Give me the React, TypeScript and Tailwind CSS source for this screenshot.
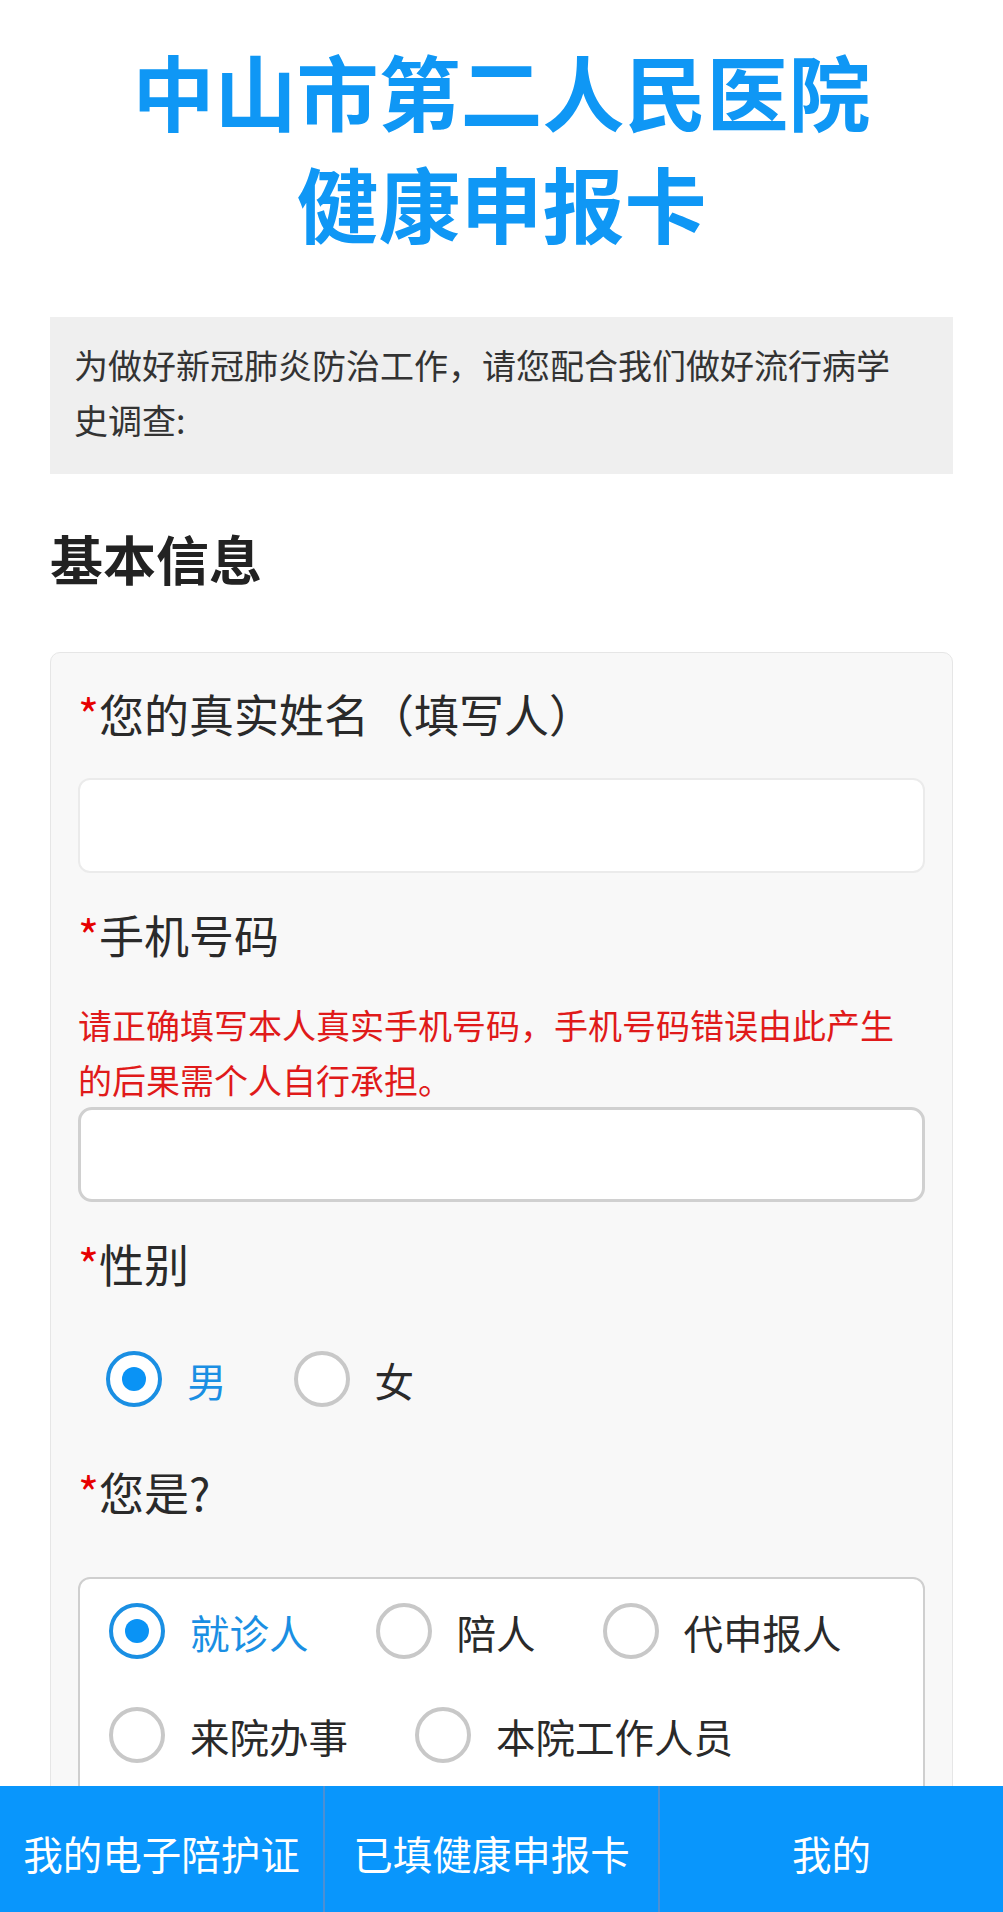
import React from "react";

const font = { fontFamily: '"Noto Sans CJK SC", "Noto Sans", sans-serif' };

function Radio({ label, checked }: { label: string; checked?: boolean }) {
  return (
    <div className="flex items-center mr-[67px]">
      <span
        className={
          "w-[56px] h-[56px] rounded-full border-[4px] flex items-center justify-center shrink-0 " +
          (checked ? "border-[#1a8fe3] bg-white" : "border-[#c8c8c8] bg-white")
        }
      >
        {checked && <span className="w-[24px] h-[24px] rounded-full bg-[#0a93f5]" />}
      </span>
      <span className={"ml-[25px] text-[39.5px] leading-[55px] " + (checked ? "text-[#1a8fe3]" : "text-[#2a2a2a]")}>
        {label}
      </span>
    </div>
  );
}

function Label({ text }: { text: string }) {
  return (
    <div className="text-[45px] leading-[60px] text-[#2a2a2a]">
      <span className="text-[#e60000]">*</span>
      {text}
    </div>
  );
}

export default function App() {
  return (
    <div className="h-screen flex flex-col bg-white overflow-hidden" style={font}>
      <div className="flex-1 overflow-hidden">
        {/* title */}
        <h1 className="pt-[34px] text-center font-bold text-[82px] leading-[112px] text-[#0f97f5]">
          中山市第二人民医院
          <br />
          健康申报卡
        </h1>

        {/* intro */}
        <div className="mx-[50px] mt-[59px] bg-[#efefef] pt-[20px] pb-[27px] px-[24px]">
          <p className="max-w-[840px] text-[34px] leading-[55px] text-[#333]">
            为做好新冠肺炎防治工作，请您配合我们做好流行病学史调查:
          </p>
        </div>

        <h2 className="mx-[50px] mt-[49px] text-[53px] leading-[70px] font-bold text-[#222]">基本信息</h2>

        {/* form card */}
        <div className="mx-[50px] mt-[59px] bg-[#f8f8f8] border border-[#e6e6e6] rounded-[10px] px-[27px] pt-[31px] pb-[40px]">
          <Label text="您的真实姓名（填写人）" />
          <div className="mt-[34px] h-[95px] bg-white border-[2px] border-[#ebebeb] rounded-[12px]" />

          <div className="mt-[32px]">
            <Label text="手机号码" />
          </div>
          <p className="mt-[32px] text-[34px] leading-[55px] text-[#e01a1a]">
            请正确填写本人真实手机号码，手机号码错误由此产生的后果需个人自行承担。
          </p>
          <div className="h-[95px] bg-white border-[3px] border-[#d0d0d0] rounded-[14px]" />

          <div className="mt-[32px]">
            <Label text="性别" />
          </div>
          <div className="mt-[57px] pl-[28px] flex">
            <Radio label="男" checked />
            <Radio label="女" />
          </div>

          <div className="mt-[55px]">
            <Label text="您是?" />
          </div>
          <div className="mt-[55px] bg-white border-[2px] border-[#cfcfcf] rounded-[12px] pt-[24px] pl-[29px] pb-[40px]">
            <div className="flex flex-wrap gap-y-[48px]">
              <Radio label="就诊人" checked />
              <Radio label="陪人" />
              <Radio label="代申报人" />
              <Radio label="来院办事" />
              <Radio label="本院工作人员" />
            </div>
          </div>
        </div>
      </div>

      {/* bottom nav */}
      <nav className="h-[126px] shrink-0 flex bg-[#0996fc] text-white text-[39.5px]">
        <div className="w-[323px] flex items-center justify-center pt-[8px]">我的电子陪护证</div>
        <div className="w-[335px] flex items-center justify-center pt-[8px] border-l-[2px] border-[#4c8fd4]">
          已填健康申报卡
        </div>
        <div className="flex-1 flex items-center justify-center pt-[8px] border-l-[2px] border-[#4c8fd4]">我的</div>
      </nav>
    </div>
  );
}
